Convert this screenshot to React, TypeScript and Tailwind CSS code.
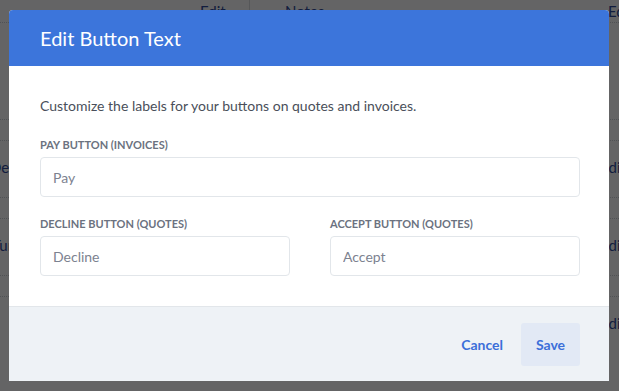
import React from 'react';

const font = { fontFamily: 'Lato, "Open Sans", sans-serif' };

const rows = [
  { left: 'Deposit', right: 'Edit' },
  { left: 'Turn', right: 'Edit' },
  { left: '', right: 'Edit' },
];

// page behind the modal, dimmed by the overlay
const Backdrop: React.FC = () => (
  <div className="absolute inset-0 bg-[#fafbfc] text-[15px] text-[#2f4a9b]">
    <div className="flex h-[23px] items-end border-b border-dotted border-[#c8ccd4]">
      <span className="ml-[200px] w-[50px] h-full border-r border-[#d6d9de]">Edit</span>
      <span className="ml-[35px] flex-1">Notes</span>
      <span className="w-[11px]">Ed</span>
    </div>
    <div className="h-[96px]" />
    {rows.map((r, i) => (
      <div key={i} className="h-[78px] border-t border-dotted border-[#c8ccd4] flex flex-col">
        <div className="h-[21px] border-b border-dotted border-[#c8ccd4]" />
        <div className="flex-1 flex items-center justify-between pb-[4px]">
          <span className={i === 0 ? '-ml-[10px]' : '-ml-[8px]'}>{r.left}</span>
          <span className="-mr-[7px]">{r.right}</span>
        </div>
      </div>
    ))}
    <div className="absolute inset-0 bg-[#000]/60" />
  </div>
);

const Field: React.FC<{ label: string; placeholder: string; className?: string }> = ({ label, placeholder, className }) => (
  <div className={className}>
    <label className="block text-[11px] leading-[14px] font-bold uppercase text-[#6b7280] mb-[5px]">{label}</label>
    <input
      placeholder={placeholder}
      className="w-full h-[40px] rounded-[4px] border border-[#e2e6ea] bg-white px-[12px] text-[14px] text-[#333] placeholder:text-[#7c8290] outline-none"
      style={font}
    />
  </div>
);

export default function App() {
  return (
    <div className="relative w-[619px] h-[391px] overflow-hidden" style={font}>
      <Backdrop />
      <div className="absolute left-[9px] top-[10px] w-[600px] bg-white rounded-t-[4px] overflow-hidden">
        <div className="h-[56px] bg-[#3c75db] flex items-center pl-[31px]">
          <h2 className="text-[20px] text-white">Edit Button Text</h2>
        </div>
        <div className="pl-[31px] pr-[29px] pt-[30px] pb-[30px]">
          <p className="text-[14px] leading-[20px] text-[#4a4f5a]">Customize the labels for your buttons on quotes and invoices.</p>
          <Field label="Pay Button (Invoices)" placeholder="Pay" className="mt-[22px]" />
          <div className="mt-[20px] grid grid-cols-2 gap-[40px]">
            <Field label="Decline Button (Quotes)" placeholder="Decline" />
            <Field label="Accept Button (Quotes)" placeholder="Accept" />
          </div>
        </div>
        <div className="h-[75px] border-t border-[#e2e6ea] bg-[#eef2f6] flex items-center justify-end gap-[18px] pr-[29px]">
          <button className="text-[14px] font-bold text-[#3c6fd9]">Cancel</button>
          <button className="h-[43px] w-[59px] rounded-[3px] bg-[#e2e9f5] text-[14px] font-bold text-[#3c6fd9]">Save</button>
        </div>
      </div>
    </div>
  );
}
